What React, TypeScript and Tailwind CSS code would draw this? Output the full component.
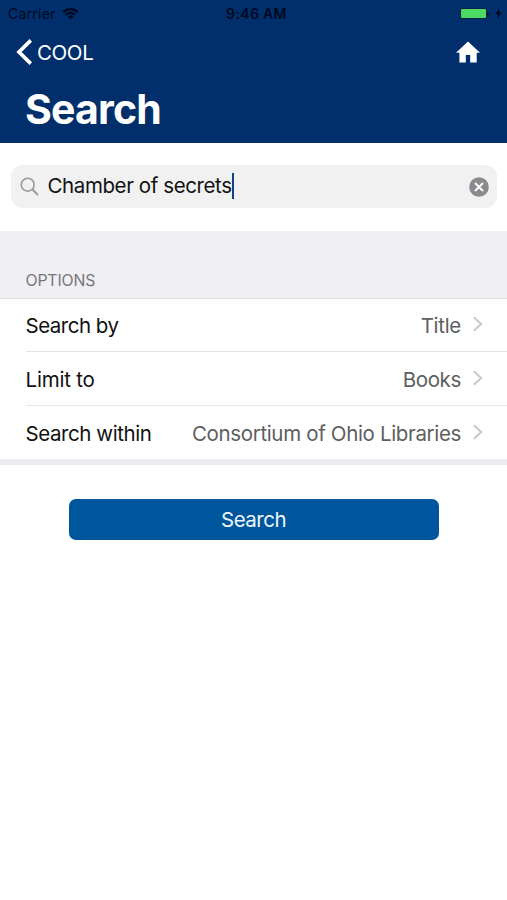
import React from "react";

function Chevron() {
  return (
    <svg width="12" height="18" viewBox="0 0 12 18" fill="none" className="ml-[11px] shrink-0 -translate-y-px">
      <path d="M1.8 2.3 L9.2 9 L1.8 15.7" stroke="#c8c8cb" strokeWidth="2" />
    </svg>
  );
}

type OptionProps = {
  label: string;
  value: string;
  labelClass: string;
  valueClass: string;
  rowClass: string;
};

function Option({ label, value, labelClass, valueClass, rowClass }: OptionProps) {
  return (
    <div className={`ml-[26px] flex items-center pr-[23px] text-[20.5px] whitespace-nowrap ${rowClass}`}>
      <span className={`-ml-[0.5px] text-[#111] ${labelClass}`}>{label}</span>
      <span className={`ml-auto text-[#5e5e5e] ${valueClass}`}>{value}</span>
      <Chevron />
    </div>
  );
}

function StatusBar() {
  return (
    <div className="grid h-[27px] grid-cols-[1fr_auto_1fr] items-center text-[14px] text-[#00091f]">
      <div className="flex items-center pl-[8px]">
        <span className="tracking-[0.25px]">Carrier</span>
        <svg width="17" height="13" viewBox="0 0 17 13" fill="none" className="ml-[6px]">
          <path d="M1.1 5.1 A10.5 10.5 0 0 1 15.9 5.1" stroke="currentColor" strokeWidth="2.2" />
          <path d="M3.8 7.8 A6.7 6.7 0 0 1 13.2 7.8" stroke="currentColor" strokeWidth="2.2" />
          <path d="M8.5 12.5 L5.7 9.7 A4 4 0 0 1 11.3 9.7 Z" fill="currentColor" />
        </svg>
      </div>
      <span className="translate-x-[3px] font-semibold tracking-[0.35px]">9:46 AM</span>
      <div className="flex items-center justify-end pr-[5px]">
        <div className="h-[11px] w-[27px] rounded-[2px] border border-[#001f47] bg-[#4cd964]" />
        <div className="h-[4px] w-[2px] rounded-r bg-[#00142f]" />
        <svg width="7" height="11" viewBox="0 0 7 11" className="ml-[6px]">
          <path d="M4.6 0 L0.3 6 H3 L2 11 L6.8 4.4 H3.9 Z" fill="currentColor" />
        </svg>
      </div>
    </div>
  );
}

export default function App() {
  return (
    <div className="min-h-[900px] w-[507px] bg-white font-['Inter','Liberation_Sans',sans-serif]">
      <header className="h-[142.5px] bg-[#012f6b]">
        <StatusBar />
        <div className="flex h-[50px] items-center pr-[26px] pl-[16px] text-white">
          <svg width="18" height="28" viewBox="0 0 18 28" fill="none">
            <path d="M14.8 2.4 L3 14 L14.8 25.6" stroke="white" strokeWidth="3.7" />
          </svg>
          <span className="ml-[3px] pt-[2px] text-[20.5px] tracking-[-0.4px]">COOL</span>
          <svg width="26" height="24" viewBox="0 0 26 24" className="ml-auto">
            <path d="M13 1.5 L25 12.7 H21.7 V22.5 H15.2 V15 H10.8 V22.5 H4.4 V12.7 H1 Z" fill="white" />
          </svg>
        </div>
        <h1 className="pt-px pl-[25px] text-[41px] leading-[62px] font-bold tracking-[-0.8px] text-white">Search</h1>
      </header>

      <div className="flex h-[88.5px] items-start px-[10.5px] pt-[22.5px]">
        <div className="flex h-[43px] w-full items-center rounded-[12px] bg-[#f1f1f2] pr-[8px] pl-[9px]">
          <svg width="19" height="19" viewBox="0 0 19 19" fill="none">
            <circle cx="7.7" cy="7.7" r="6.4" stroke="#9a9a9e" strokeWidth="1.6" />
            <path d="M12.3 12.3 L18 18" stroke="#9a9a9e" strokeWidth="2" />
          </svg>
          <span className="ml-[9px] text-[20.5px] tracking-[-0.4px] text-[#111]">Chamber of secrets</span>
          <span className="-mt-[2px] h-[26px] w-[2px] bg-[#174080]" />
          <svg width="20" height="20" viewBox="0 0 20 20" className="ml-auto">
            <circle cx="10" cy="10" r="9.8" fill="#8b8b8f" />
            <path d="M6 6 L14 14 M14 6 L6 14" stroke="white" strokeWidth="2" />
          </svg>
        </div>
      </div>

      <section>
        <div className="h-[68px] border-b border-[#dfdfe3] bg-[#efeff4] pt-[38px] pl-[25.5px] text-[15.8px] leading-[24px] text-[#77777b]">
          <span className="tracking-[-0.15px]">OPTIONS</span>
        </div>
        <Option label="Search by" value="Title" labelClass="pt-[2px] tracking-[-0.5px]" valueClass="pt-[2px] tracking-[-0.3px]" rowClass="h-[53px] border-b border-[#e5e5e8]" />
        <Option label="Limit to" value="Books" labelClass="pt-[4px] tracking-[-0.2px]" valueClass="pt-[4px] tracking-[-0.35px]" rowClass="h-[54px] border-b border-[#e5e5e8]" />
        <Option label="Search within" value="Consortium of Ohio Libraries" labelClass="pt-[3px] tracking-[-0.42px]" valueClass="pt-[3px] tracking-[-0.34px]" rowClass="h-[53px]" />
        <div className="h-[6px] bg-[#ededf1]" />
      </section>

      <div className="flex justify-center pt-[34px]">
        <button className="h-[41px] w-[370px] rounded-[7px] bg-[#00569c] pt-[2px] text-[20.5px] tracking-[-0.5px] text-[#eef6fc]">
          Search
        </button>
      </div>
    </div>
  );
}
